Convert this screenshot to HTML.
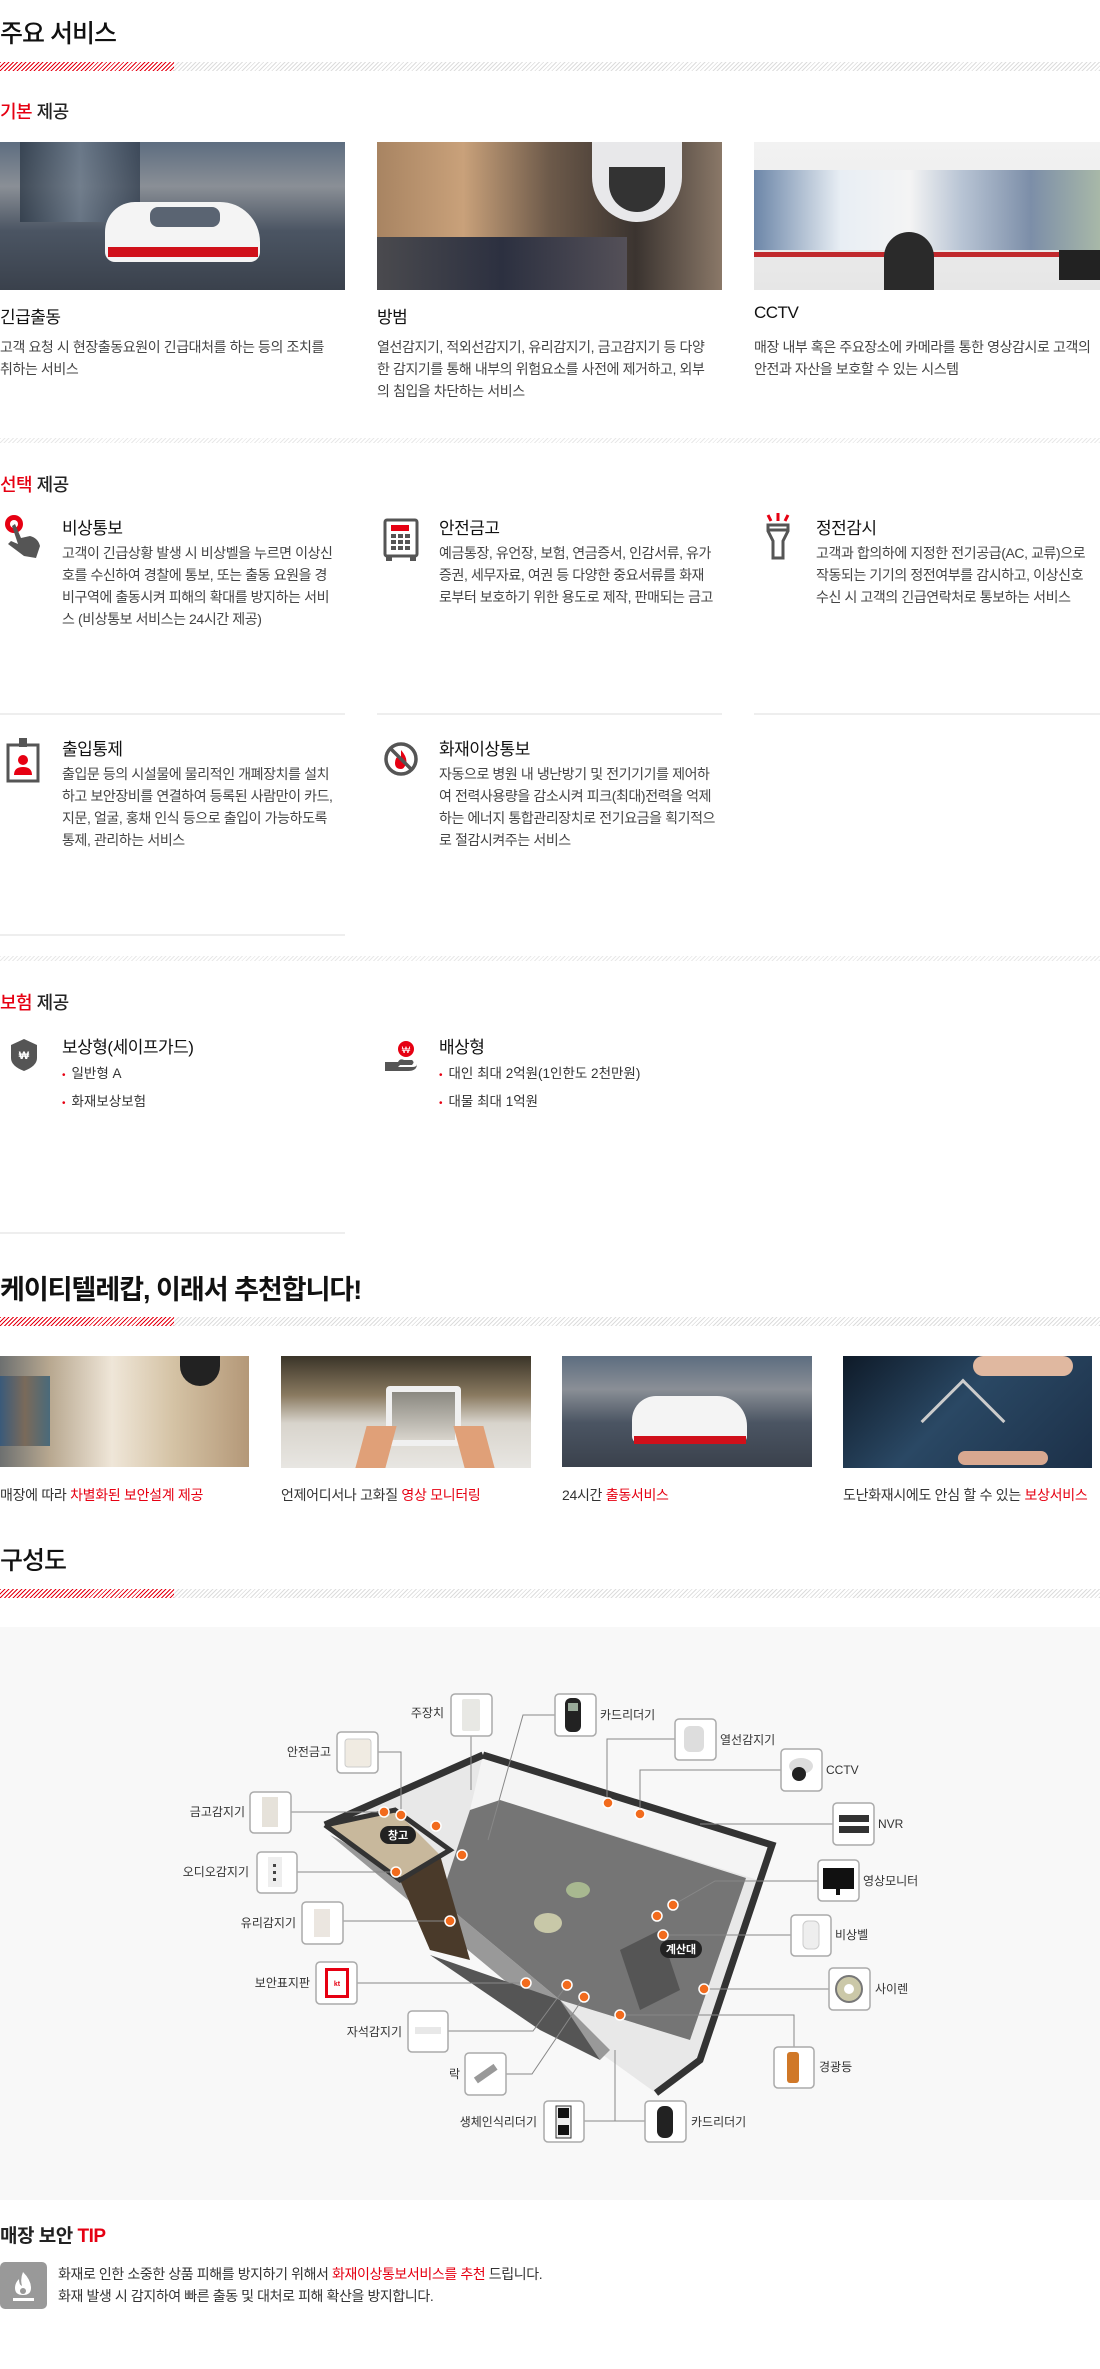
<!DOCTYPE html>
<html><head><meta charset="utf-8">
<style>
*{margin:0;padding:0;box-sizing:border-box}
body{width:1100px;height:2369px;position:relative;background:#fff;font-family:"Liberation Sans","Noto Sans CJK KR",sans-serif;color:#222;overflow:hidden}
.a{position:absolute;white-space:nowrap}
.h1{font-size:25px;font-weight:500;color:#111;letter-spacing:-1px}
.h2{font-size:18px;font-weight:500;color:#222;letter-spacing:-0.5px}
.red{color:#e60012}
.hatch{position:absolute;left:0;width:1100px;height:9px;background:repeating-linear-gradient(135deg,#ddd 0 1px,#fff 1px 3px)}
.hatch:before{content:"";position:absolute;left:0;top:0;width:174px;height:9px;background:repeating-linear-gradient(135deg,#e60012 0 1px,#fff 1px 3px)}
.sep{position:absolute;left:0;width:1100px;height:5px;background:repeating-linear-gradient(135deg,#e8e8e8 0 1px,#fff 1px 3px)}
.t{font-size:17px;color:#111;letter-spacing:-0.5px}
.d{font-size:14px;color:#444;line-height:22px;letter-spacing:-0.4px}
.line{position:absolute;height:2px;background:#eee}
.bl{font-size:13.5px;color:#333}
.bl:before{content:"•";color:#e60012;margin-right:6px;font-size:10px}
.cap{font-size:14px;color:#333;letter-spacing:-0.3px}
.img{position:absolute;overflow:hidden}
.lb{font-size:12px;fill:#333;font-family:"Liberation Sans","Noto Sans CJK KR",sans-serif}
</style></head><body>

<div class="a h1" style="left:0;top:14px">주요 서비스</div>
<div class="hatch" style="top:62px"></div>
<div class="a h2" style="left:0;top:98px"><span class="red">기본</span> 제공</div>

<div class="img" style="left:0;top:142px;width:345px;height:148px;background:linear-gradient(180deg,#5d6d80 0%,#8a8f96 30%,#4b5563 60%,#3a414c 100%)">
 <div style="position:absolute;left:20px;top:0;width:120px;height:80px;background:linear-gradient(90deg,#2e3a48,#6c7a8a,#344050);opacity:.8"></div>
 <div style="position:absolute;left:105px;top:60px;width:155px;height:60px;border-radius:30px 40px 10px 10px;background:#f4f4f4"></div>
 <div style="position:absolute;left:108px;top:105px;width:150px;height:10px;background:#d0101a"></div>
 <div style="position:absolute;left:150px;top:65px;width:70px;height:20px;border-radius:8px;background:#5a6472"></div>
</div>
<div class="img" style="left:377px;top:142px;width:345px;height:148px;background:linear-gradient(90deg,#a88462 0%,#c9a17a 25%,#6d5a4a 50%,#3b3430 75%,#8a7868 100%)">
 <div style="position:absolute;left:0;top:95px;width:250px;height:53px;background:linear-gradient(90deg,#4a4a4e,#2c3040,#545058)"></div>
 <div style="position:absolute;left:215px;top:0;width:90px;height:80px;border-radius:0 0 45px 45px;background:#e8e8ea"></div>
 <div style="position:absolute;left:232px;top:25px;width:56px;height:45px;border-radius:0 0 28px 28px;background:#333"></div>
</div>
<div class="img" style="left:754px;top:142px;width:346px;height:148px;background:linear-gradient(180deg,#f2f2f2 0%,#e6e6e6 100%)">
 <div style="position:absolute;left:0;top:28px;width:346px;height:80px;background:linear-gradient(90deg,#6c86a8,#e8eef4 25%,#f4f4f4 45%,#b8c4d4 60%,#7c8ea8 80%,#a8b8a8)"></div>
 <div style="position:absolute;left:0;top:110px;width:346px;height:5px;background:#c0282c"></div>
 <div style="position:absolute;left:130px;top:90px;width:50px;height:58px;border-radius:25px 25px 0 0;background:#2a2a2a"></div>
 <div style="position:absolute;left:305px;top:108px;width:41px;height:30px;background:#222"></div>
</div>

<div class="a t" style="left:0;top:303px">긴급출동</div>
<div class="a d" style="left:0;top:336px">고객 요청 시 현장출동요원이 긴급대처를 하는 등의 조치를<br>취하는 서비스</div>
<div class="a t" style="left:377px;top:303px">방범</div>
<div class="a d" style="left:377px;top:336px">열선감지기, 적외선감지기, 유리감지기, 금고감지기 등 다양<br>한 감지기를 통해 내부의 위험요소를 사전에 제거하고, 외부<br>의 침입을 차단하는 서비스</div>
<div class="a t" style="left:754px;top:303px">CCTV</div>
<div class="a d" style="left:754px;top:336px">매장 내부 혹은 주요장소에 카메라를 통한 영상감시로 고객의<br>안전과 자산을 보호할 수 있는 시스템</div>

<div class="sep" style="top:438px"></div>
<div class="a h2" style="left:0;top:471px"><span class="red">선택</span> 제공</div>

<svg class="a" style="left:2px;top:514px" width="42" height="46" viewBox="0 0 42 46">
 <circle cx="12" cy="10" r="9" fill="#e60012"/><circle cx="12" cy="10" r="4" fill="#fff"/>
 <path d="M10 12 L13 10 L19 24 L28 22 Q36 24 38 32 L34 44 L22 42 L6 30 L9 27 L16 30 Z" fill="#555"/>
</svg>
<div class="a t" style="left:62px;top:514px">비상통보</div>
<div class="a d" style="left:62px;top:542px">고객이 긴급상황 발생 시 비상벨을 누르면 이상신<br>호를 수신하여 경찰에 통보, 또는 출동 요원을 경<br>비구역에 출동시켜 피해의 확대를 방지하는 서비<br>스 (비상통보 서비스는 24시간 제공)</div>

<svg class="a" style="left:383px;top:518px" width="36" height="44" viewBox="0 0 36 44">
 <rect x="2" y="2" width="32" height="36" rx="2" fill="none" stroke="#555" stroke-width="3"/>
 <rect x="8" y="7" width="18" height="6" fill="#e60012"/>
 <g fill="#555"><rect x="8" y="16" width="5" height="4"/><rect x="15" y="16" width="5" height="4"/><rect x="22" y="16" width="5" height="4"/><rect x="8" y="22" width="5" height="4"/><rect x="15" y="22" width="5" height="4"/><rect x="22" y="22" width="5" height="4"/><rect x="8" y="28" width="5" height="4"/><rect x="15" y="28" width="5" height="4"/><rect x="22" y="28" width="5" height="4"/><rect x="3" y="38" width="6" height="5"/><rect x="27" y="38" width="6" height="5"/></g>
</svg>
<div class="a t" style="left:439px;top:514px">안전금고</div>
<div class="a d" style="left:439px;top:542px">예금통장, 유언장, 보험, 연금증서, 인감서류, 유가<br>증권, 세무자료, 여권 등 다양한 중요서류를 화재<br>로부터 보호하기 위한 용도로 제작, 판매되는 금고</div>

<svg class="a" style="left:764px;top:513px" width="28" height="48" viewBox="0 0 28 48">
 <g stroke="#e60012" stroke-width="3"><line x1="4" y1="2" x2="7" y2="8"/><line x1="14" y1="0" x2="14" y2="8"/><line x1="24" y1="2" x2="21" y2="8"/></g>
 <path d="M4 12 H24 V18 L19 28 V45 H9 V28 L4 18 Z" fill="none" stroke="#555" stroke-width="3"/><line x1="4" y1="17" x2="24" y2="17" stroke="#555" stroke-width="3"/>
</svg>
<div class="a t" style="left:816px;top:514px">정전감시</div>
<div class="a d" style="left:816px;top:542px">고객과 합의하에 지정한 전기공급(AC, 교류)으로<br>작동되는 기기의 정전여부를 감시하고, 이상신호<br>수신 시 고객의 긴급연락처로 통보하는 서비스</div>

<div class="line" style="left:0;top:713px;width:345px"></div>
<div class="line" style="left:377px;top:713px;width:345px"></div>
<div class="line" style="left:754px;top:713px;width:346px"></div>

<svg class="a" style="left:6px;top:737px" width="36" height="46" viewBox="0 0 36 46">
 <rect x="2" y="8" width="30" height="36" fill="none" stroke="#555" stroke-width="3"/>
 <rect x="13" y="1" width="8" height="9" fill="#555"/>
 <circle cx="17" cy="23" r="5" fill="#e60012"/><path d="M8 38 Q8 30 17 30 Q26 30 26 38 Z" fill="#e60012"/>
</svg>
<div class="a t" style="left:62px;top:735px">출입통제</div>
<div class="a d" style="left:62px;top:763px">출입문 등의 시설물에 물리적인 개폐장치를 설치<br>하고 보안장비를 연결하여 등록된 사람만이 카드,<br>지문, 얼굴, 홍채 인식 등으로 출입이 가능하도록<br>통제, 관리하는 서비스</div>

<svg class="a" style="left:383px;top:741px" width="36" height="36" viewBox="0 0 36 36">
 <circle cx="18" cy="18" r="15" fill="none" stroke="#555" stroke-width="3.5"/>
 <path d="M18 9 Q25 17 23 23 Q21 28 18 28 Q12 28 12 22 Q12 17 16 14 Q16 18 18 19 Z" fill="#e60012"/>
 <line x1="8" y1="8" x2="28" y2="28" stroke="#555" stroke-width="3.5"/>
</svg>
<div class="a t" style="left:439px;top:735px">화재이상통보</div>
<div class="a d" style="left:439px;top:763px">자동으로 병원 내 냉난방기 및 전기기기를 제어하<br>여 전력사용량을 감소시켜 피크(최대)전력을 억제<br>하는 에너지 통합관리장치로 전기요금을 획기적으<br>로 절감시켜주는 서비스</div>

<div class="line" style="left:0;top:934px;width:345px"></div>
<div class="sep" style="top:956px"></div>
<div class="a h2" style="left:0;top:989px"><span class="red">보험</span> 제공</div>

<svg class="a" style="left:10px;top:1038px" width="28" height="34" viewBox="0 0 28 34">
 <path d="M14 1 L27 7 V20 Q27 28 14 33 Q1 28 1 20 V7 Z" fill="#555"/>
 <text x="14" y="21" font-size="11" fill="#fff" text-anchor="middle" font-family="Liberation Sans,sans-serif" font-weight="bold">₩</text>
</svg>
<div class="a t" style="left:62px;top:1033px">보상형(세이프가드)</div>
<div class="a bl" style="left:62px;top:1062px">일반형 A</div>
<div class="a bl" style="left:62px;top:1090px">화재보상보험</div>

<svg class="a" style="left:384px;top:1040px" width="34" height="34" viewBox="0 0 34 34">
 <circle cx="22" cy="9" r="8" fill="#e60012"/>
 <text x="22" y="13" font-size="9" fill="#fff" text-anchor="middle" font-family="Liberation Sans,sans-serif">₩</text>
 <path d="M1 22 H14 Q16 18 20 20 H28 Q31 22 28 25 H16 L14 27 H28 Q33 27 33 24 Q33 31 24 31 H1 Z" fill="#555"/>
</svg>
<div class="a t" style="left:439px;top:1033px">배상형</div>
<div class="a bl" style="left:439px;top:1062px">대인 최대 2억원(1인한도 2천만원)</div>
<div class="a bl" style="left:439px;top:1090px">대물 최대 1억원</div>

<div class="line" style="left:0;top:1232px;width:345px"></div>

<div class="a" style="left:0;top:1268px;font-size:27px;font-weight:bold;color:#111;letter-spacing:-1px">케이티텔레캅, 이래서 추천합니다!</div>
<div class="hatch" style="top:1317px"></div>

<div class="img" style="left:0;top:1356px;width:249px;height:111px;background:linear-gradient(90deg,#6d7070 0%,#b8a890 20%,#efe6d8 45%,#d4c2a4 70%,#b49878 100%)">
 <div style="position:absolute;left:180px;top:0;width:40px;height:30px;border-radius:0 0 20px 20px;background:#222"></div>
 <div style="position:absolute;left:0;top:20px;width:50px;height:70px;background:linear-gradient(90deg,#3a5a7a,#7a6a5a,#4a6a7a)"></div>
</div>
<div class="img" style="left:281px;top:1356px;width:250px;height:112px;background:linear-gradient(180deg,#3a3428 0%,#8a7a60 35%,#d8d4cc 60%,#e8e6e2 100%)">
 <div style="position:absolute;left:105px;top:30px;width:75px;height:60px;background:#f0f0f0;border-radius:4px"></div>
 <div style="position:absolute;left:111px;top:36px;width:63px;height:48px;background:linear-gradient(180deg,#8a8880,#d8d4cc)"></div>
 <div style="position:absolute;left:80px;top:70px;width:30px;height:42px;background:#e0a078;transform:skewX(-15deg)"></div>
 <div style="position:absolute;left:178px;top:70px;width:30px;height:42px;background:#e0a078;transform:skewX(15deg)"></div>
</div>
<div class="img" style="left:562px;top:1356px;width:250px;height:111px;background:linear-gradient(180deg,#5d6d80 0%,#8a8f96 30%,#4b5563 60%,#3a414c 100%)">
 <div style="position:absolute;left:70px;top:40px;width:115px;height:48px;border-radius:24px 30px 8px 8px;background:#f4f4f4"></div>
 <div style="position:absolute;left:72px;top:80px;width:112px;height:8px;background:#d0101a"></div>
</div>
<div class="img" style="left:843px;top:1356px;width:249px;height:112px;background:linear-gradient(135deg,#0e1a28 0%,#2a4864 45%,#1c3048 100%)">
 <div style="position:absolute;left:90px;top:35px;width:60px;height:60px;border-left:3px solid #ccc;border-top:3px solid #ccc;transform:rotate(45deg);"></div>
 <div style="position:absolute;left:130px;top:0;width:100px;height:20px;border-radius:10px;background:#e0b8a0"></div>
 <div style="position:absolute;left:115px;top:95px;width:90px;height:14px;border-radius:8px;background:#d8a890"></div>
</div>

<div class="a cap" style="left:0;top:1485px">매장에 따라 <span class="red">차별화된 보안설계 제공</span></div>
<div class="a cap" style="left:281px;top:1485px">언제어디서나 고화질 <span class="red">영상 모니터링</span></div>
<div class="a cap" style="left:562px;top:1485px">24시간 <span class="red">출동서비스</span></div>
<div class="a cap" style="left:843px;top:1485px">도난화재시에도 안심 할 수 있는 <span class="red">보상서비스</span></div>

<div class="a h1" style="left:0;top:1541px">구성도</div>
<div class="hatch" style="top:1589px"></div>

<div class="a" style="left:0;top:1627px;width:1100px;height:573px;background:#f8f8f8"></div>
<svg class="a" style="left:0;top:0" width="1100" height="2369" viewBox="0 0 1100 2369">
 <polygon points="483,1755 772,1845 700,2060 656,2093 603,2055 325,1825" fill="#e8e8e8"/>
 <polygon points="483,1755 772,1845 758,1880 500,1800 470,1810" fill="#f4f4f4"/>
 <polygon points="470,1810 500,1800 746,1878 690,2040 560,2000 440,1900" fill="#757575"/>
 <polygon points="340,1840 440,1900 560,2000 610,2050 600,2060 330,1835" fill="#999"/>
 <polygon points="325,1825 395,1810 440,1855 400,1880" fill="#c8b89c"/>
 <polygon points="400,1880 440,1855 470,1960 430,1950" fill="#4a3a2a"/>
 <polygon points="430,1955 540,2030 600,2060 560,2000" fill="#555"/>
 <polyline points="483,1755 772,1845 700,2060 656,2093" fill="none" stroke="#333" stroke-width="7"/>
 <polyline points="325,1825 483,1755" fill="none" stroke="#333" stroke-width="7"/>
 <polyline points="325,1825 395,1810 450,1850 400,1880 325,1825" fill="none" stroke="#333" stroke-width="5"/>
 <ellipse cx="578" cy="1890" rx="12" ry="8" fill="#a8b890"/>
 <ellipse cx="548" cy="1923" rx="14" ry="10" fill="#c8c8a8"/>
 <polygon points="620,1950 660,1930 680,1990 640,2010" fill="#555"/>
 <rect x="380" y="1826" width="36" height="18" rx="9" fill="#222"/><text x="398" y="1839" font-size="11" fill="#fff" text-anchor="middle" font-weight="bold" font-family="Liberation Sans,Noto Sans CJK KR,sans-serif">창고</text>
 <rect x="660" y="1940" width="42" height="18" rx="9" fill="#222"/><text x="681" y="1953" font-size="11" fill="#fff" text-anchor="middle" font-weight="bold" font-family="Liberation Sans,Noto Sans CJK KR,sans-serif">계산대</text>
 <g stroke="#888" stroke-width="1" fill="none">
  <polyline points="471,1736 471,1790"/>
  <polyline points="555,1715 523,1715 488,1840"/>
  <polyline points="378,1752 401,1752 401,1815"/>
  <polyline points="291,1812 384,1812"/>
  <polyline points="297,1872 396,1872"/>
  <polyline points="343,1921 450,1921"/>
  <polyline points="357,1983 526,1983"/>
  <polyline points="675,1739 607,1739 607,1803"/>
  <polyline points="781,1770 640,1770 640,1814"/>
  <polyline points="833,1824 700,1824"/>
  <polyline points="818,1881 715,1881 673,1905"/>
  <polyline points="791,1935 663,1935"/>
  <polyline points="829,1989 704,1989"/>
  <polyline points="448,2031 533,2031 567,1985"/>
  <polyline points="506,2074 532,2074 584,1997"/>
  <polyline points="584,2121 645,2121"/>
  <polyline points="615,2121 615,2050"/>
  <polyline points="620,2015 794,2015 794,2047"/>
 </g>
 <g fill="#f26b1d" stroke="#fff" stroke-width="1.5">
  <circle cx="384" cy="1812" r="5"/><circle cx="401" cy="1815" r="5"/><circle cx="436" cy="1826" r="5"/><circle cx="462" cy="1855" r="5"/><circle cx="396" cy="1872" r="5"/><circle cx="608" cy="1803" r="5"/><circle cx="640" cy="1814" r="5"/><circle cx="673" cy="1905" r="5"/><circle cx="657" cy="1916" r="5"/><circle cx="663" cy="1935" r="5"/><circle cx="450" cy="1921" r="5"/><circle cx="526" cy="1983" r="5"/><circle cx="567" cy="1985" r="5"/><circle cx="584" cy="1997" r="5"/><circle cx="704" cy="1989" r="5"/><circle cx="620" cy="2015" r="5"/>
 </g>
 <g fill="#fff" stroke="#aaa" stroke-width="1.5">
  <rect x="451" y="1694" width="41" height="42" rx="4"/><rect x="555" y="1694" width="41" height="42" rx="4"/><rect x="675" y="1719" width="41" height="41" rx="4"/><rect x="781" y="1749" width="41" height="42" rx="4"/><rect x="833" y="1803" width="41" height="42" rx="4"/><rect x="818" y="1860" width="41" height="41" rx="4"/><rect x="791" y="1915" width="40" height="41" rx="4"/><rect x="829" y="1968" width="41" height="42" rx="4"/><rect x="337" y="1732" width="41" height="41" rx="4"/><rect x="250" y="1792" width="41" height="41" rx="4"/><rect x="257" y="1852" width="40" height="41" rx="4"/><rect x="302" y="1902" width="41" height="42" rx="4"/><rect x="316" y="1962" width="41" height="42" rx="4"/><rect x="408" y="2011" width="40" height="41" rx="4"/><rect x="465" y="2053" width="41" height="42" rx="4"/><rect x="544" y="2101" width="40" height="41" rx="4"/><rect x="645" y="2101" width="41" height="41" rx="4"/><rect x="774" y="2047" width="40" height="41" rx="4"/>
 </g>
 <g>
  <rect x="462" y="1699" width="18" height="32" rx="2" fill="#e8e8e4"/>
  <rect x="565" y="1698" width="16" height="34" rx="6" fill="#222"/><rect x="568" y="1703" width="10" height="8" fill="#9a9"/>
  <rect x="684" y="1726" width="20" height="26" rx="6" fill="#ddd"/>
  <ellipse cx="801" cy="1766" rx="12" ry="8" fill="#ddd"/><circle cx="799" cy="1774" r="7" fill="#222"/>
  <rect x="839" y="1815" width="30" height="7" fill="#333"/><rect x="839" y="1826" width="30" height="7" fill="#333"/>
  <rect x="823" y="1868" width="31" height="21" fill="#111"/><rect x="836" y="1889" width="4" height="6" fill="#111"/>
  <rect x="803" y="1921" width="16" height="28" rx="5" fill="#eee" stroke="#ccc"/>
  <circle cx="849" cy="1989" r="13" fill="#cbc8a8" stroke="#777" stroke-width="2"/><circle cx="849" cy="1989" r="5" fill="#fff"/>
  <rect x="345" y="1739" width="26" height="28" rx="3" fill="#f0ebe2" stroke="#ccc"/>
  <rect x="262" y="1797" width="16" height="30" fill="#e6e2da"/>
  <rect x="268" y="1857" width="14" height="30" fill="#eee"/><g fill="#444"><rect x="273" y="1864" width="3" height="3"/><rect x="273" y="1871" width="3" height="3"/><rect x="273" y="1878" width="3" height="3"/></g>
  <rect x="314" y="1909" width="16" height="28" fill="#ebe6e0"/>
  <rect x="325" y="1968" width="24" height="30" fill="#e60012"/><rect x="328" y="1971" width="18" height="24" fill="#fff"/><text x="337" y="1986" font-size="7" fill="#e60012" text-anchor="middle" font-family="Liberation Sans,sans-serif" font-weight="bold">kt</text>
  <rect x="415" y="2027" width="26" height="7" fill="#e8e8e8"/>
  <rect x="474" y="2070" width="24" height="7" fill="#999" transform="rotate(-35 486 2074)"/>
  <rect x="556" y="2106" width="15" height="32" fill="#eee" stroke="#333"/><rect x="558" y="2108" width="11" height="10" fill="#111"/><rect x="558" y="2125" width="11" height="10" fill="#111"/>
  <rect x="657" y="2106" width="16" height="32" rx="7" fill="#222"/>
  <rect x="787" y="2052" width="12" height="31" rx="3" fill="#d07828"/>
 </g>
 <g class="lb">
  <text x="444" y="1717" text-anchor="end" class="lb">주장치</text>
  <text x="600" y="1719" class="lb">카드리더기</text>
  <text x="720" y="1744" class="lb">열선감지기</text>
  <text x="826" y="1774" class="lb">CCTV</text>
  <text x="878" y="1828" class="lb">NVR</text>
  <text x="863" y="1885" class="lb">영상모니터</text>
  <text x="835" y="1939" class="lb">비상벨</text>
  <text x="875" y="1993" class="lb">사이렌</text>
  <text x="331" y="1756" text-anchor="end" class="lb">안전금고</text>
  <text x="245" y="1816" text-anchor="end" class="lb">금고감지기</text>
  <text x="249" y="1876" text-anchor="end" class="lb">오디오감지기</text>
  <text x="296" y="1927" text-anchor="end" class="lb">유리감지기</text>
  <text x="310" y="1987" text-anchor="end" class="lb">보안표지판</text>
  <text x="402" y="2036" text-anchor="end" class="lb">자석감지기</text>
  <text x="460" y="2078" text-anchor="end" class="lb">락</text>
  <text x="537" y="2126" text-anchor="end" class="lb">생체인식리더기</text>
  <text x="691" y="2126" class="lb">카드리더기</text>
  <text x="819" y="2071" class="lb">경광등</text>
 </g>
</svg>

<div class="a h2" style="left:0;top:2221px;font-size:19px;font-weight:bold">매장 보안 <span class="red">TIP</span></div>
<div class="a" style="left:0;top:2262px;width:47px;height:47px;border-radius:5px;background:#999"></div>
<svg class="a" style="left:0;top:2262px" width="47" height="47" viewBox="0 0 47 47">
 <path d="M23 10 Q31 18 31 26 Q31 33 23 33 Q15 33 15 26 Q15 21 19 17 Q19 23 22 24 Q20 17 23 10 Z" fill="#fff"/>
 <circle cx="23" cy="29" r="3" fill="#999"/>
 <rect x="13" y="36" width="21" height="3" fill="#fff"/>
</svg>
<div class="a d" style="left:58px;top:2263px;color:#333">화재로 인한 소중한 상품 피해를 방지하기 위해서 <span class="red">화재이상통보서비스를 추천</span> 드립니다.<br>화재 발생 시 감지하여 빠른 출동 및 대처로 피해 확산을 방지합니다.</div>

</body></html>
